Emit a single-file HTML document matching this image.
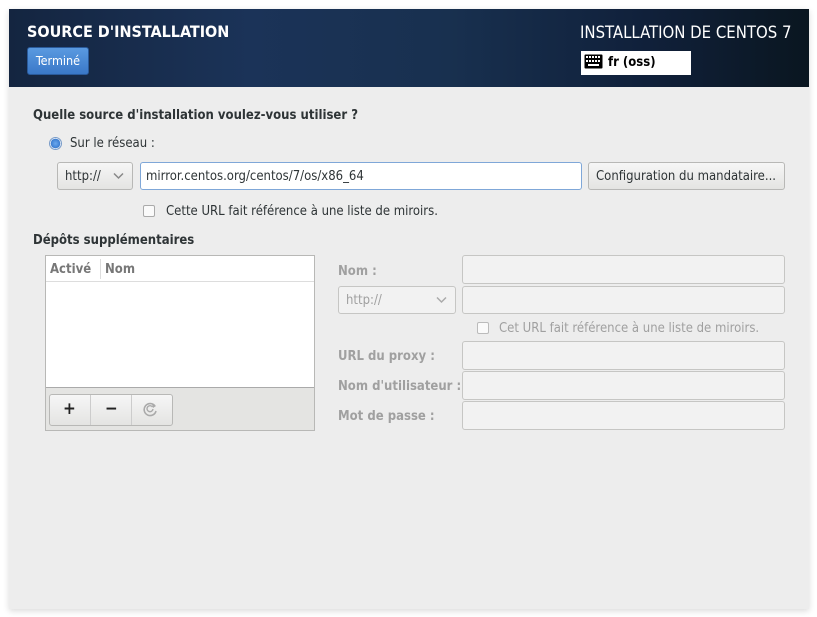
<!DOCTYPE html>
<html><head><meta charset="utf-8"><style>
*{box-sizing:border-box;margin:0;padding:0}
body{width:817px;height:617px;background:#fff;font-family:"DejaVu Sans Condensed","DejaVu Sans",sans-serif;font-stretch:condensed;font-size:13px;color:#2e3436;position:relative;overflow:hidden}
.win{position:absolute;left:9px;top:9px;width:800px;height:600px;background:#ededed;box-shadow:0 2px 6px rgba(0,0,0,.15)}
.hdr{position:absolute;left:9px;top:9px;width:800px;height:78px;background:linear-gradient(90deg,#142540 0%,#1b3358 30%,#18304f 55%,#10203a 80%,#0a1620 100%)}
.a{position:absolute}
.title{left:27px;top:22px;color:#fff;font-weight:bold;font-size:16px}
.done{left:27px;top:47px;width:62px;height:28px;background:linear-gradient(#5a9ae0,#3a78c8);border:1px solid #2a5a9a;border-radius:3px;color:#fff;font-size:12.5px;text-align:center;line-height:26px}
.rt{left:580px;top:23px;color:#fff;font-size:16.6px;font-weight:normal}
.kb{left:581px;top:51px;width:110px;height:24px;background:#fff;color:#000;font-weight:bold;font-size:13px;line-height:24px;padding-left:27px}
.field{background:#fff;border:1px solid #b8bcb8;border-radius:3px}
.dis{background:#f2f2f2;border:1px solid #c6c6c4;border-radius:3px}
.btn{background:linear-gradient(#f6f6f6,#e4e4e2);border:1px solid #b8b8b6;border-radius:3px}
.gray{color:#a0a0a0;font-weight:bold}
.cb{width:12px;height:12px;border:1px solid #aaa;border-radius:2px;background:#fafafa}
.chev{position:absolute;right:8px;top:9px}
</style></head><body>
<div class="win"></div>
<div class="hdr"></div>
<div class="a title">SOURCE D'INSTALLATION</div>
<div class="a done">Terminé</div>
<div class="a rt">INSTALLATION DE CENTOS 7</div>
<div class="a kb">fr (oss)</div>
<svg class="a" style="left:584px;top:54px" width="19" height="15" viewBox="0 0 19 15"><rect x="0.5" y="0.5" width="18" height="14" rx="1" fill="#000"/><g fill="#fff"><rect x="2" y="2" width="2" height="2"/><rect x="5" y="2" width="2" height="2"/><rect x="8" y="2" width="2" height="2"/><rect x="11" y="2" width="2" height="2"/><rect x="14" y="2" width="2" height="2"/><rect x="2" y="6" width="2" height="2"/><rect x="5" y="6" width="2" height="2"/><rect x="8" y="6" width="2" height="2"/><rect x="11" y="6" width="2" height="2"/><rect x="14" y="6" width="2" height="2"/><rect x="4" y="10" width="11" height="2"/></g></svg>

<div class="a" style="left:33px;top:108px;font-weight:bold">Quelle source d'installation voulez-vous utiliser ?</div>
<div class="a" style="left:49px;top:137px;width:13px;height:13px;border-radius:50%;border:1px solid #7a9cc8;background:radial-gradient(circle,#6aa8ee 0,#3a7cd0 60%,#dfe8f4 62%)"></div>
<div class="a" style="left:70px;top:136px">Sur le réseau :</div>
<div class="a btn" style="left:57px;top:162px;width:76px;height:28px;padding:6px 0 0 7px">http://<svg class="chev" width="11" height="8" viewBox="0 0 11 8"><path d="M1 1.5L5.5 6L10 1.5" fill="none" stroke="#888" stroke-width="1.5"/></svg></div>
<div class="a field" style="left:140px;top:162px;width:442px;height:28px;border-color:#7fa7d8;padding:6px 0 0 5px">mirror.centos.org/centos/7/os/x86_64</div>
<div class="a btn" style="left:588px;top:162px;width:197px;height:28px;padding:6px 0 0 7px">Configuration du mandataire...</div>
<div class="a cb" style="left:143px;top:205px"></div>
<div class="a" style="left:166px;top:204px">Cette URL fait référence à une liste de miroirs.</div>

<div class="a" style="left:33px;top:233px;font-weight:bold">Dépôts supplémentaires</div>
<div class="a" style="left:45px;top:255px;width:270px;height:176px;border:1px solid #b8b8b6;background:#e4e4e2"></div>
<div class="a" style="left:46px;top:256px;width:268px;height:132px;background:#fff;border-bottom:1px solid #aaa"></div>
<div class="a" style="left:46px;top:281px;width:268px;height:1px;background:#ddd"></div>
<div class="a" style="left:100px;top:259px;width:1px;height:20px;background:#ddd"></div>
<div class="a" style="left:50px;top:262px;color:#777;font-weight:bold">Activé</div>
<div class="a" style="left:105px;top:262px;color:#777;font-weight:bold">Nom</div>
<div class="a btn" style="left:49px;top:394px;width:124px;height:32px"></div>
<div class="a" style="left:90px;top:395px;width:1px;height:30px;background:#ccc"></div>
<div class="a" style="left:131px;top:395px;width:1px;height:30px;background:#ccc"></div>
<div class="a" style="left:63px;top:399px;font-size:17px;font-weight:bold;color:#222">+</div>
<div class="a" style="left:105px;top:399px;font-size:17px;font-weight:bold;color:#222">−</div>
<svg class="a" style="left:143px;top:402px" width="15" height="15" viewBox="0 0 15 15"><path d="M12 4A6 6 0 1 0 13 9" fill="none" stroke="#aaa" stroke-width="1.6"/><path d="M10 7A3 3 0 1 1 9.5 5" fill="none" stroke="#aaa" stroke-width="1.4"/><path d="M9 2L13 4L10 6Z" fill="#aaa"/></svg>

<div class="a gray" style="left:338px;top:264px">Nom :</div>
<div class="a dis" style="left:462px;top:255px;width:323px;height:29px"></div>
<div class="a dis" style="left:338px;top:286px;width:118px;height:28px;color:#a0a0a0;padding:6px 0 0 7px">http://<svg class="chev" width="11" height="8" viewBox="0 0 11 8"><path d="M1 1.5L5.5 6L10 1.5" fill="none" stroke="#aaa" stroke-width="1.5"/></svg></div>
<div class="a dis" style="left:462px;top:286px;width:323px;height:28px"></div>
<div class="a cb" style="left:477px;top:322px;border-color:#bbb"></div>
<div class="a" style="left:499px;top:321px;color:#a0a0a0">Cet URL fait référence à une liste de miroirs.</div>
<div class="a gray" style="left:338px;top:349px">URL du proxy :</div>
<div class="a dis" style="left:462px;top:341px;width:323px;height:29px"></div>
<div class="a gray" style="left:338px;top:379px">Nom d'utilisateur :</div>
<div class="a dis" style="left:462px;top:371px;width:323px;height:29px"></div>
<div class="a gray" style="left:338px;top:409px">Mot de passe :</div>
<div class="a dis" style="left:462px;top:401px;width:323px;height:29px"></div>
</body></html>
